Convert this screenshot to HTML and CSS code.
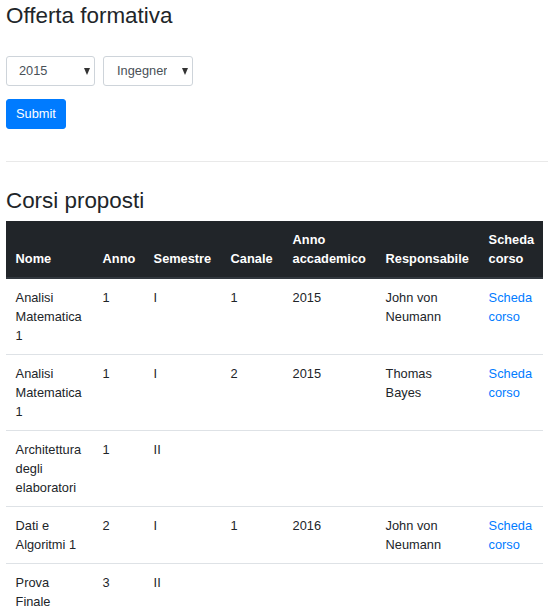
FILE: index.html
```html
<!DOCTYPE html>
<html lang="it">
<head>
<meta charset="utf-8">
<title>Offerta formativa</title>
<link rel="stylesheet" href="styles.css">
</head>
<body>
<div class="container">
  <h3 class="title">Offerta formativa</h3>
  <form class="filters">
    <div class="selects">
      <span class="select-wrap year">
        <select class="custom-select"><option>2015</option><option>2016</option></select>
        <span class="arrow"></span>
      </span>
      <span class="select-wrap course">
        <select class="custom-select"><option>Ingegneria Informatica</option></select>
        <span class="arrow"></span>
      </span>
    </div>
    <button type="button" class="btn">Submit</button>
  </form>
  <hr class="divider">
  <h3 class="title title-courses">Corsi proposti</h3>
  <table class="table">
    <colgroup>
      <col class="c-nome"><col class="c-anno"><col class="c-sem"><col class="c-canale"><col class="c-aa"><col class="c-resp"><col class="c-scheda">
    </colgroup>
    <thead>
      <tr>
        <th>Nome</th><th>Anno</th><th>Semestre</th><th>Canale</th><th>Anno accademico</th><th>Responsabile</th><th>Scheda corso</th>
      </tr>
    </thead>
    <tbody>
      <tr>
        <td>Analisi Matematica 1</td><td>1</td><td>I</td><td>1</td><td>2015</td><td>John von Neumann</td><td><a href="#">Scheda corso</a></td>
      </tr>
      <tr>
        <td>Analisi Matematica 1</td><td>1</td><td>I</td><td>2</td><td>2015</td><td>Thomas Bayes</td><td><a href="#">Scheda corso</a></td>
      </tr>
      <tr>
        <td>Architettura degli elaboratori</td><td>1</td><td>II</td><td></td><td></td><td></td><td></td>
      </tr>
      <tr>
        <td>Dati e Algoritmi 1</td><td>2</td><td>I</td><td>1</td><td>2016</td><td>John von Neumann</td><td><a href="#">Scheda corso</a></td>
      </tr>
      <tr>
        <td>Prova Finale</td><td>3</td><td>II</td><td></td><td></td><td></td><td></td>
      </tr>
    </tbody>
  </table>
</div>
</body>
</html>
```
FILE: styles.css
```css
* { box-sizing: border-box; }
html, body {
  margin: 0;
  padding: 0;
  background: #fff;
}
body {
  font-family: "Liberation Sans", Arial, sans-serif;
  font-size: 12.8px;
  line-height: 1.5;
  color: #212529;
}
.container {
  padding: 3px 0 0 6px;
}
.title {
  margin: 0;
  font-size: 22.4px;
  font-weight: 400;
  line-height: 1.2;
}
.filters {
  margin-top: 26px;
}
.selects {
  display: flex;
  gap: 8px;
}
.select-wrap {
  position: relative;
  display: inline-block;
}
.select-wrap.year { width: 89px; }
.select-wrap.course { width: 90px; }
.custom-select {
  -webkit-appearance: none;
  appearance: none;
  display: block;
  width: 100%;
  height: 30px;
  margin: 0;
  padding: 0 24px 0 12px;
  font-family: inherit;
  font-size: 12.8px;
  color: #495057;
  background: #fff;
  border: 1px solid #ced4da;
  border-radius: 3px;
  outline: none;
}
.course .custom-select {
  padding: 0 25px 0 13px;
}
.arrow {
  position: absolute;
  right: 5px;
  top: 12px;
  width: 0;
  height: 0;
  border-left: 3.5px solid transparent;
  border-right: 3.5px solid transparent;
  border-top: 7px solid #333;
  pointer-events: none;
}
.btn {
  display: block;
  margin-top: 13px;
  width: 60px;
  height: 30px;
  padding: 0;
  font-family: inherit;
  font-size: 12.8px;
  color: #fff;
  background: #007bff;
  border: 1px solid #007bff;
  border-radius: 3px;
}
.divider {
  margin: 32px 0 0 0;
  border: 0;
  border-top: 1px solid #e9e9e9;
}
.title-courses {
  margin-top: 26px;
  margin-bottom: 6px;
}
.table {
  width: 537px;
  table-layout: fixed;
  border-collapse: collapse;
}
.c-nome { width: 87px; }
.c-anno { width: 51px; }
.c-sem { width: 77px; }
.c-canale { width: 62px; }
.c-aa { width: 93px; }
.c-resp { width: 103px; }
.c-scheda { width: 64px; }
.table th {
  background: #212529;
  color: #fff;
  font-weight: 700;
  text-align: left;
  vertical-align: bottom;
  padding: 9px 9.6px 9px;
  line-height: 19px;
  border-bottom: 2px solid #32383e;
}
.table td {
  vertical-align: top;
  padding: 9px 9.6px;
  line-height: 19px;
  border-top: 1px solid #dee2e6;
}
.table tbody tr:first-child td {
  border-top: 0;
}
.table a {
  color: #007bff;
  text-decoration: none;
}
```
